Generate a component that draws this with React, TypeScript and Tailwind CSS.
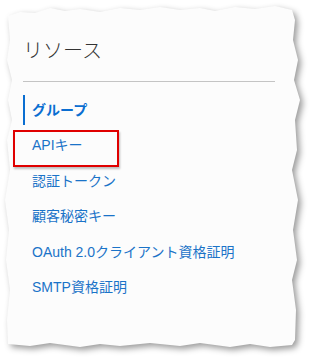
const paper =
  '8,16 20,12 35,13 50,8 65,11 80,9 100,12 120,8 140,10 160,7 180,10 200,8 215,11 235,7 255,9 275,6 292,10 ' +
  '295,20 293,40 298,60 294,80 300,100 295,120 297,150 292,170 298,200 293,230 297,260 292,280 296,310 295,340 292,345 ' +
  '270,347 250,344 230,347 200,343 180,346 150,343 120,346 100,344 80,347 50,343 30,346 8,344 ' +
  '7,320 10,290 6,260 9,230 5,200 10,170 7,140 12,120 8,100 12,80 7,60 10,40';

const links = ['APIキー', '認証トークン', '顧客秘密キー', 'OAuth 2.0クライアント資格証明', 'SMTP資格証明'];

export default function App() {
  return (
    <div className="relative w-[310px] h-[362px] bg-white overflow-hidden" style={{ fontFamily: '"Liberation Sans", "Noto Sans CJK JP", sans-serif' }}>
      <svg className="absolute inset-0 drop-shadow-[3px_3px_3px_rgba(0,0,0,0.4)]" width="310" height="362">
        <polygon points={paper} fill="#fcfcfc" />
      </svg>

      <div className="relative pt-[37px] pl-[23px] pr-[35px]">
        <h2 className="text-[20px] leading-[28px] text-[#333] font-light">リソース</h2>
        <div className="mt-[16px] h-px bg-[#c4c4c4]" />

        <ul className="mt-[13px] flex flex-col gap-[5.5px]">
          <li className="h-[30px] flex items-center border-l-2 border-[#0a6ed1] pl-[7px] text-[14px] font-bold text-[#0a6ed1]">
            グループ
          </li>
          {links.map((t, i) => (
            <li key={t} className="relative h-[30px] flex items-center pl-[9px] text-[14px] text-[#1a73c8]">
              {t}
              {i === 0 && (
                <span className="absolute left-[-10px] top-[-0.5px] w-[106px] h-[37px] border-2 border-[#e00000] shadow-[1px_2px_2px_rgba(0,0,0,0.25)]" />
              )}
            </li>
          ))}
        </ul>
      </div>
    </div>
  );
}
